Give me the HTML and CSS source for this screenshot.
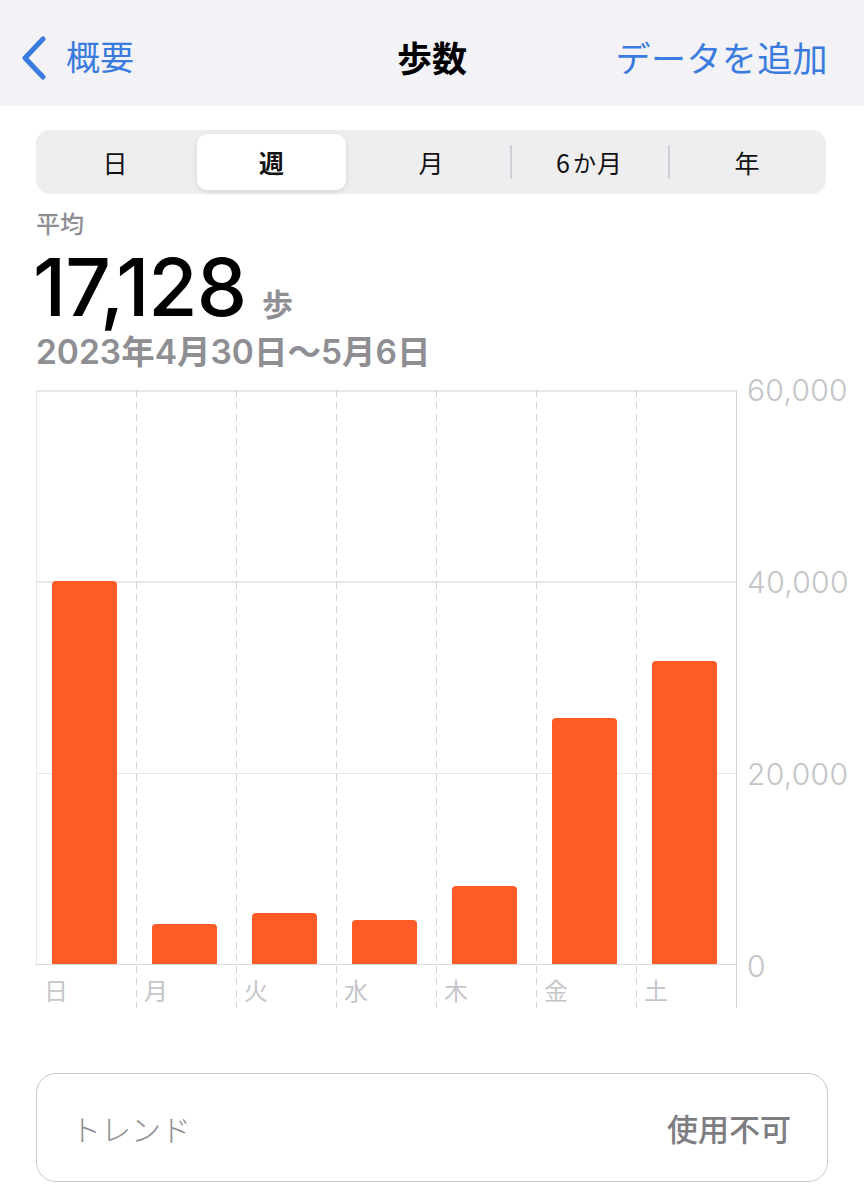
FILE: index.html
```html
<!DOCTYPE html>
<html lang="ja">
<head>
<meta charset="utf-8">
<link rel="stylesheet" href="styles.css">
</head>
<body>
<header class="nav">
  <div class="nav-left">
    <svg class="chev" width="28" height="44" viewBox="0 0 28 44"><path d="M23 3 L5 22 L23 41" fill="none" stroke="#3a7be0" stroke-width="5" stroke-linecap="round" stroke-linejoin="round"/></svg>
    <span class="back">概要</span>
  </div>
  <div class="nav-title">歩数</div>
  <div class="nav-right">データを追加</div>
</header>
<main class="content">
  <div class="segment">
    <div class="seg">日</div>
    <div class="seg active">週</div>
    <div class="seg">月</div>
    <div class="seg sep">6<span class="ka">か</span>月</div>
    <div class="seg sep">年</div>
  </div>
  <div class="summary">
    <div class="label">平均</div>
    <div class="value"><span class="num">17,128</span><span class="unit">歩</span></div>
    <div class="range">2023年4月30日〜5月6日</div>
  </div>
  <div class="chart">
    <div class="plot">
      <div class="col first"><div class="barzone"><div class="bar" style="height:383px"></div></div><div class="day">日</div></div>
      <div class="col"><div class="barzone"><div class="bar" style="height:40px"></div></div><div class="day">月</div></div>
      <div class="col"><div class="barzone"><div class="bar" style="height:51px"></div></div><div class="day">火</div></div>
      <div class="col"><div class="barzone"><div class="bar" style="height:44px"></div></div><div class="day">水</div></div>
      <div class="col"><div class="barzone"><div class="bar" style="height:78px"></div></div><div class="day">木</div></div>
      <div class="col"><div class="barzone"><div class="bar" style="height:246px"></div></div><div class="day">金</div></div>
      <div class="col"><div class="barzone"><div class="bar" style="height:303px"></div></div><div class="day">土</div></div>
    </div>
    <div class="yaxis">
      <div class="tick">60,000</div>
      <div class="tick">40,000</div>
      <div class="tick">20,000</div>
      <div class="tick">0</div>
    </div>
  </div>
  <div class="trend">
    <span class="trend-label">トレンド</span>
    <span class="trend-value">使用不可</span>
  </div>
</main>
</body>
</html>
```
FILE: styles.css
```css
* { box-sizing: border-box; }
html, body { margin: 0; padding: 0; }
body {
  width: 864px;
  height: 1200px;
  overflow: hidden;
  background: #ffffff;
  font-family: "Noto Sans CJK JP", "Noto Sans", sans-serif;
  color: #000;
}
.nav {
  height: 106px;
  background: #f2f2f7;
  display: grid;
  grid-template-columns: 1fr auto 1fr;
  align-items: center;
  padding: 10px 28px 0 28px;
}
.nav-left {
  display: flex;
  align-items: center;
  gap: 18px;
  color: #3a7be0;
  font-size: 34px;
  line-height: 1;
  margin-left: -8px;
}
.chev { display: block; margin-top: 0; }
.back { margin-top: -4px; }
.nav-title {
  font-size: 35px;
  font-weight: 700;
  line-height: 1;
  margin-top: -4px;
}
.nav-right {
  justify-self: end;
  color: #3a7be0;
  font-size: 35px;
  letter-spacing: 0.4px;
  line-height: 1;
  margin-top: -4px;
  margin-right: 8px;
}
.content {
  padding: 24px 36px 0 36px;
}
.segment {
  height: 64px;
  width: 790px;
  background: #eeeef0;
  border-radius: 14px;
  display: flex;
  align-items: center;
}
.seg {
  flex: 0 0 158px;
  height: 56px;
  display: flex;
  align-items: center;
  justify-content: center;
  font-size: 25px;
  color: #111;
  position: relative;
}
.seg.active {
  flex: 0 0 149px;
  background: #fff;
  border-radius: 10px;
  margin: 0 6px 0 3px;
  font-weight: 700;
  box-shadow: 0 2px 6px rgba(0,0,0,0.10);
}
.seg.sep::before {
  content: "";
  position: absolute;
  left: 0;
  top: 11px;
  bottom: 11px;
  width: 1.5px;
  background: #cfcfd4;
}
.seg .ka { font-size: 23px; margin: 0 1px 0 3px; }
.summary {
  padding-top: 14px;
}
.label {
  font-size: 24px;
  color: #8e8e93;
  line-height: 30px;
  font-weight: 500;
}
.value {
  display: flex;
  align-items: baseline;
  margin-top: 13px;
  height: 72px;
}
.num {
  font-family: Inter, "Noto Sans", sans-serif;
  font-size: 80px;
  font-weight: 500;
  letter-spacing: -1px;
  line-height: 72px;
  margin-left: -3px;
}
.unit {
  font-size: 31px;
  color: #8e8e93;
  font-weight: 700;
  margin-left: 16px;
}
.range {
  font-family: Inter, "Noto Sans CJK JP", sans-serif;
  font-size: 33.5px;
  color: #8e8e93;
  font-weight: 600;
  line-height: 40px;
  margin-top: 9px;
}
.chart {
  display: flex;
  margin-top: 18px;
}
.plot {
  width: 701px;
  height: 618px;
  display: flex;
  border-right: 1.5px solid #d6d6da;
  background-image: repeating-linear-gradient(to bottom, #e7e7ea 0, #e7e7ea 1.5px, transparent 1.5px, transparent 191.33px);
  background-size: 100% 576px;
  background-repeat: no-repeat;
}
.col {
  width: 100px;
  display: flex;
  flex-direction: column;
  background-image: linear-gradient(to bottom, #d2d2d6 0, #d2d2d6 7px, transparent 7px);
  background-size: 1.2px 12px;
  background-repeat: repeat-y;
  background-position: left top;
}
.col.first {
  background-image: linear-gradient(#e9e9ec, #e9e9ec);
  background-size: 1.2px 576px;
  background-repeat: no-repeat;
}
.barzone {
  height: 575px;
  display: flex;
  align-items: flex-end;
  border-bottom: 1.5px solid #dcdce0;
  padding-left: 16px;
}
.bar {
  width: 65px;
  background: #fe5b26;
  border-radius: 4px 4px 0 0;
}
.day {
  font-size: 24px;
  color: #c5c5c9;
  padding-left: 8px;
  line-height: 1;
  margin-top: 13px;
}
.yaxis {
  height: 576px;
  display: flex;
  flex-direction: column;
  justify-content: space-between;
  padding-left: 10px;
}
.tick {
  height: 0;
  display: flex;
  align-items: center;
  font-family: Inter, "Noto Sans", sans-serif;
  font-weight: 300;
  font-size: 30px;
  color: #c4c4c8;
  letter-spacing: 0.3px;
}
.trend {
  margin-top: 65px;
  width: 792px;
  height: 109px;
  border: 1.5px solid #c9c9ce;
  border-radius: 20px;
  display: flex;
  align-items: center;
  justify-content: space-between;
  padding: 0 36px 0 34px;
}
.trend-label {
  font-size: 30px;
  color: #8e8e93;
  font-weight: 300;
}
.trend-value {
  font-size: 31px;
  color: #7d7d82;
  font-weight: 500;
}
```
